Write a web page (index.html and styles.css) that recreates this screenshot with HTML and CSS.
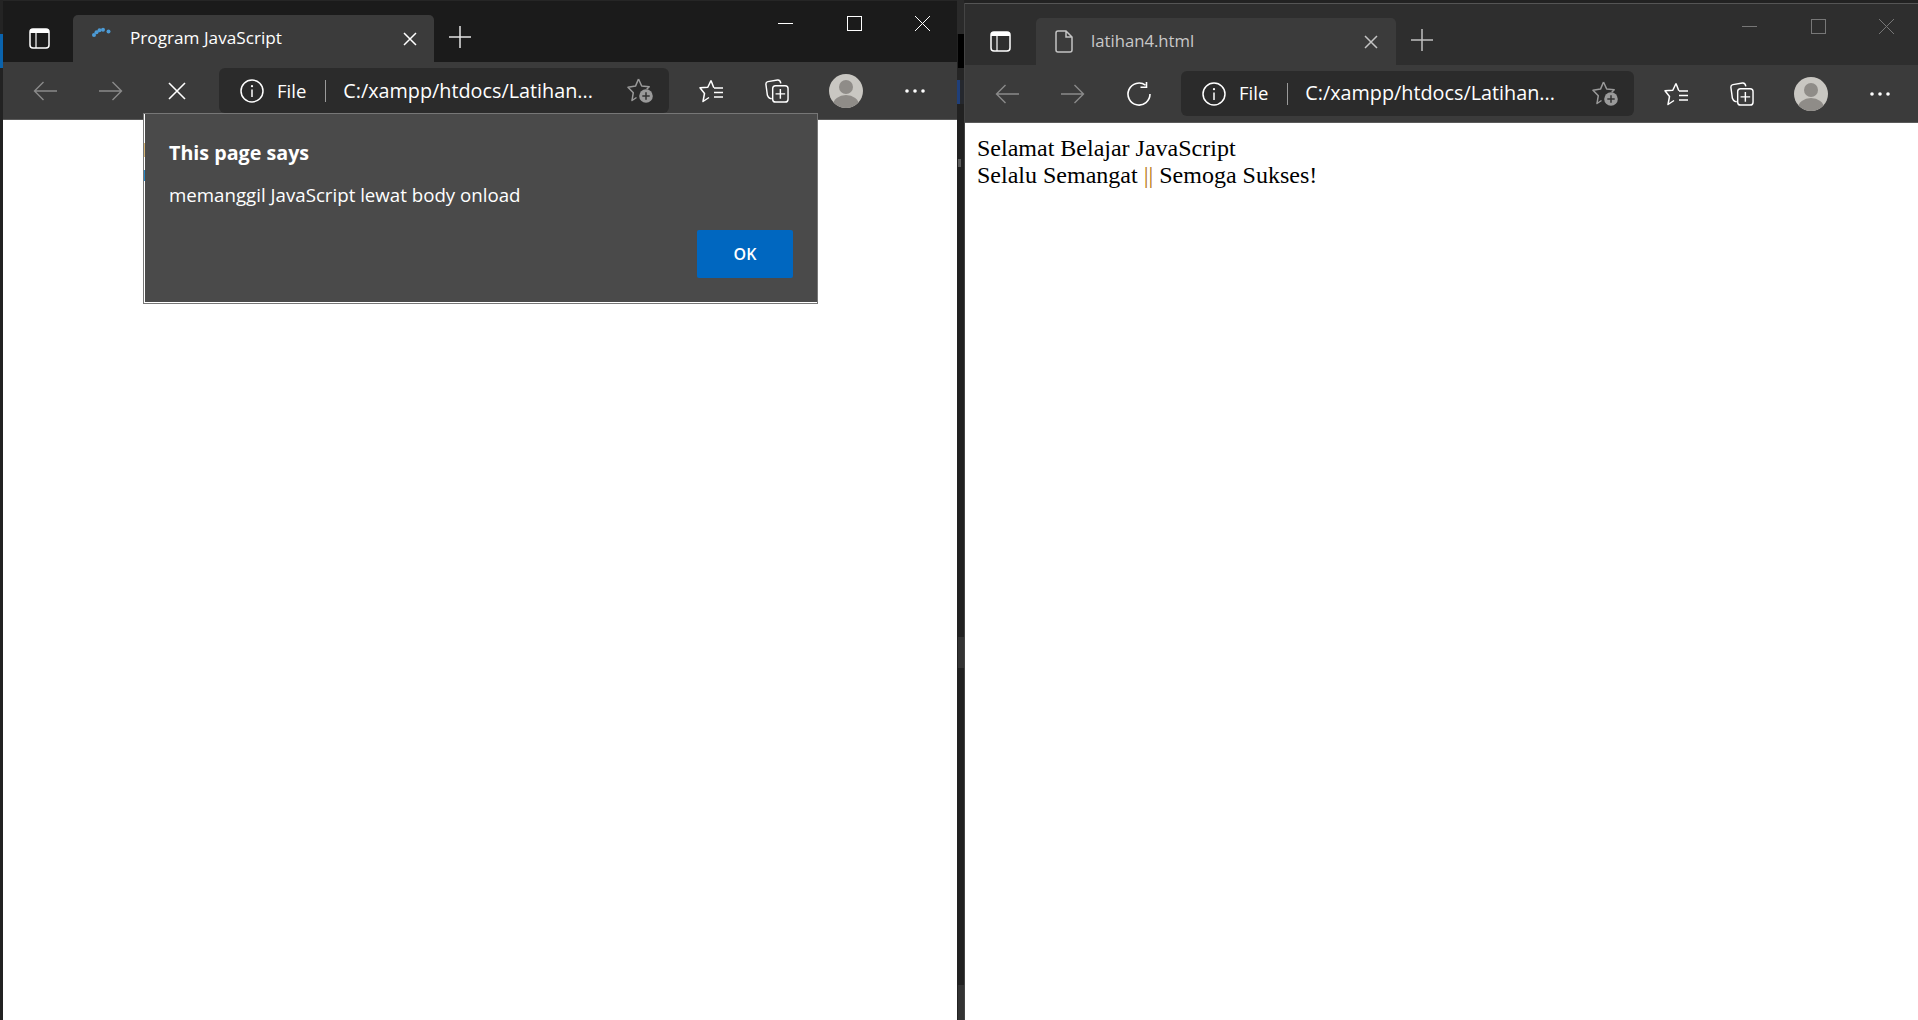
FILE: index.html
```html
<!DOCTYPE html>
<html lang="en">
<head>
  <meta charset="UTF-8">
  <title>Program JavaScript</title>
  <link rel="stylesheet" href="styles.css">
</head>
<body>
  <!-- shared icons -->
  <svg class="icon-defs" width="0" height="0">
    <symbol id="i-sidebar" viewBox="0 0 21 21">
      <rect x="1" y="1" width="19" height="19" rx="3" fill="none" stroke="currentColor" stroke-width="1.5"/>
      <path d="M1 5V4a3 3 0 0 1 3-3h13a3 3 0 0 1 3 3v1z" fill="currentColor"/>
      <path d="M7 5v15" fill="none" stroke="currentColor" stroke-width="1.2"/>
    </symbol>
    <symbol id="i-close" viewBox="0 0 14 14">
      <path d="M1 1l12 12M13 1L1 13" fill="none" stroke="currentColor" stroke-width="1.5"/>
    </symbol>
    <symbol id="i-plus" viewBox="0 0 22 22">
      <path d="M11 0v22M0 11h22" fill="none" stroke="currentColor" stroke-width="1.5"/>
    </symbol>
    <symbol id="i-back" viewBox="0 0 24 20">
      <path d="M24 10H1.5M10.5 1l-9 9 9 9" fill="none" stroke="currentColor" stroke-width="1.4"/>
    </symbol>
    <symbol id="i-forward" viewBox="0 0 24 20">
      <path d="M0 10h22.500M13.500 1l9 9-9 9" fill="none" stroke="currentColor" stroke-width="1.4"/>
    </symbol>
    <symbol id="i-stop" viewBox="0 0 18 18">
      <path d="M1 1l16 16M17 1L1 17" fill="none" stroke="currentColor" stroke-width="1.6"/>
    </symbol>
    <symbol id="i-reload" viewBox="0 0 24 24">
      <path d="M18.500 3.200A11 11 0 1 0 23 12" fill="none" stroke="currentColor" stroke-width="1.6"/>
      <path d="M19.500 0v5.200h-6" fill="none" stroke="currentColor" stroke-width="1.6"/>
    </symbol>
    <symbol id="i-info" viewBox="0 0 24 24">
      <circle cx="12" cy="12" r="11" fill="none" stroke="currentColor" stroke-width="1.5"/>
      <path d="M12 10.500v7.500" fill="none" stroke="currentColor" stroke-width="1.5"/>
      <circle cx="12" cy="7.200" r="1.100" fill="currentColor"/>
    </symbol>
    <symbol id="i-star-add" viewBox="0 0 26 25">
      <path d="M11.500 1l3.200 7 7.500.8-2.500 2.400M9.500 19.500L5 22.500l1.300-7.800L1 9.200l7.500-1.100L11.500 1" fill="none" stroke="#9a9a9a" stroke-width="1.500" stroke-linejoin="round"/>
      <circle cx="19" cy="18" r="6.800" fill="#9a9a9a"/>
      <path d="M19 14.300v7.400M15.300 18h7.400" fill="none" stroke="#333" stroke-width="1.500"/>
    </symbol>
    <symbol id="i-favorites" viewBox="0 0 24 24">
      <path d="M12 1.500l2.800 7.200M10 18.500l-6 4 1.500-8L1 8.800l7.800-.6L12 1.500" fill="none" stroke="currentColor" stroke-width="1.500" stroke-linejoin="round"/>
      <path d="M15 9h9M15 13.500h9M15 18h9" fill="none" stroke="currentColor" stroke-width="1.500"/>
    </symbol>
    <symbol id="i-collections" viewBox="0 0 25 25">
      <path d="M7 20.500l-2-.5c-1.500-.5-2-1.500-2.500-3L1 6c-.3-2 .5-3 2-3.300l10-1.700c1.500-.2 3 .5 3.500 3.500" fill="none" stroke="currentColor" stroke-width="1.500"/>
      <rect x="8" y="7" width="16" height="17" rx="3" fill="none" stroke="currentColor" stroke-width="1.500"/>
      <path d="M16 10.500v10M11 15.500h10" fill="none" stroke="currentColor" stroke-width="1.500"/>
    </symbol>
    <symbol id="i-avatar" viewBox="0 0 34 34">
      <clipPath id="avatar-clip"><circle cx="17" cy="17" r="17"/></clipPath>
      <circle cx="17" cy="17" r="17" fill="#c9c7c2"/>
      <circle cx="17" cy="13" r="7" fill="#8f8c88"/>
      <ellipse cx="17" cy="31" rx="13" ry="10" fill="#8f8c88" clip-path="url(#avatar-clip)"/>
    </symbol>
    <symbol id="i-more" viewBox="0 0 20 4">
      <circle cx="2" cy="2" r="1.800" fill="currentColor"/>
      <circle cx="10" cy="2" r="1.800" fill="currentColor"/>
      <circle cx="18" cy="2" r="1.800" fill="currentColor"/>
    </symbol>
    <symbol id="i-minimize" viewBox="0 0 15 15">
      <path d="M0 7.500h15" fill="none" stroke="currentColor"/>
    </symbol>
    <symbol id="i-maximize" viewBox="0 0 15 15">
      <rect x=".5" y=".5" width="14" height="14" fill="none" stroke="currentColor"/>
    </symbol>
    <symbol id="i-winclose" viewBox="0 0 15 15">
      <path d="M0 0l15 15M15 0L0 15" fill="none" stroke="currentColor"/>
    </symbol>
    <symbol id="i-file" viewBox="0 0 18 23">
      <path d="M1 3a2 2 0 0 1 2-2h8l6 6v13a2 2 0 0 1-2 2H3a2 2 0 0 1-2-2zM11 1v6h6" fill="none" stroke="currentColor" stroke-width="1.500"/>
    </symbol>
  </svg>

  <div class="desktop">
    <div class="strip strip-left">
      <div class="seg seg-edge"></div>
      <div class="seg seg-blue"></div>
      <div class="seg seg-rest"></div>
    </div>

    <!-- left window: loading page with alert -->
    <section class="window window-left">
      <header class="titlebar">
        <button class="side-btn"><svg class="ic-sidebar"><use href="#i-sidebar"/></svg></button>
        <div class="tab">
          <svg class="tab-spinner" viewBox="0 0 20 10">
            <circle cx="3" cy="8" r="2" fill="#4c9bd6"/>
            <circle cx="5.500" cy="5.300" r="2" fill="#4c9bd6"/>
            <circle cx="8.500" cy="3.300" r="2" fill="#4c9bd6"/>
            <circle cx="12" cy="2.800" r="2" fill="#4c9bd6"/>
            <circle cx="17.500" cy="4.500" r="2" fill="#4c9bd6"/>
          </svg>
          <span class="tab-title">Program JavaScript</span>
          <svg class="ic-tabclose"><use href="#i-close"/></svg>
        </div>
        <svg class="ic-plus"><use href="#i-plus"/></svg>
        <div class="win-controls">
          <button class="win-btn"><svg class="ic-win"><use href="#i-minimize"/></svg></button>
          <button class="win-btn"><svg class="ic-win"><use href="#i-maximize"/></svg></button>
          <button class="win-btn"><svg class="ic-win"><use href="#i-winclose"/></svg></button>
        </div>
      </header>
      <nav class="toolbar">
        <button class="tool tool-off"><svg class="ic-arrow"><use href="#i-back"/></svg></button>
        <button class="tool tool-off"><svg class="ic-arrow"><use href="#i-forward"/></svg></button>
        <button class="tool"><svg class="ic-stop"><use href="#i-stop"/></svg></button>
        <div class="address">
          <svg class="ic-info"><use href="#i-info"/></svg>
          <span class="addr-file">File</span>
          <span class="addr-sep"></span>
          <span class="addr-url">C:/xampp/htdocs/Latihan...</span>
          <svg class="ic-staradd"><use href="#i-star-add"/></svg>
        </div>
        <button class="tool"><svg class="ic-tool"><use href="#i-favorites"/></svg></button>
        <button class="tool"><svg class="ic-tool"><use href="#i-collections"/></svg></button>
        <button class="tool tool-profile"><svg class="ic-avatar"><use href="#i-avatar"/></svg></button>
        <button class="tool"><svg class="ic-more"><use href="#i-more"/></svg></button>
      </nav>
      <main class="page">
        <div class="alert">
          <div class="alert-title">This page says</div>
          <div class="alert-msg">memanggil JavaScript lewat body onload</div>
          <div class="alert-actions"><button class="alert-ok">OK</button></div>
        </div>
      </main>
    </section>

    <div class="strip strip-mid">
      <div class="seg seg-top"></div>
      <div class="seg seg-black"></div>
      <div class="seg seg-gap1"></div>
      <div class="seg seg-task"></div>
      <div class="seg seg-gap0"></div>
      <div class="seg seg-dot"></div>
      <div class="seg seg-gap2"></div>
      <div class="seg seg-light1"></div>
      <div class="seg seg-gap3"></div>
      <div class="seg seg-light2"></div>
    </div>

    <!-- right window: inactive, page loaded -->
    <section class="window window-right">
      <header class="titlebar">
        <button class="side-btn"><svg class="ic-sidebar"><use href="#i-sidebar"/></svg></button>
        <div class="tab">
          <svg class="ic-file"><use href="#i-file"/></svg>
          <span class="tab-title">latihan4.html</span>
          <svg class="ic-tabclose"><use href="#i-close"/></svg>
        </div>
        <svg class="ic-plus"><use href="#i-plus"/></svg>
        <div class="win-controls">
          <button class="win-btn"><svg class="ic-win"><use href="#i-minimize"/></svg></button>
          <button class="win-btn"><svg class="ic-win"><use href="#i-maximize"/></svg></button>
          <button class="win-btn"><svg class="ic-win"><use href="#i-winclose"/></svg></button>
        </div>
      </header>
      <nav class="toolbar">
        <button class="tool tool-off"><svg class="ic-arrow"><use href="#i-back"/></svg></button>
        <button class="tool tool-off"><svg class="ic-arrow"><use href="#i-forward"/></svg></button>
        <button class="tool"><svg class="ic-reload"><use href="#i-reload"/></svg></button>
        <div class="address">
          <svg class="ic-info"><use href="#i-info"/></svg>
          <span class="addr-file">File</span>
          <span class="addr-sep"></span>
          <span class="addr-url">C:/xampp/htdocs/Latihan...</span>
          <svg class="ic-staradd"><use href="#i-star-add"/></svg>
        </div>
        <button class="tool"><svg class="ic-tool"><use href="#i-favorites"/></svg></button>
        <button class="tool"><svg class="ic-tool"><use href="#i-collections"/></svg></button>
        <button class="tool tool-profile"><svg class="ic-avatar"><use href="#i-avatar"/></svg></button>
        <button class="tool"><svg class="ic-more"><use href="#i-more"/></svg></button>
      </nav>
      <main class="page page-text">
        Selamat Belajar JavaScript<br>
        Selalu Semangat <span class="pipes">||</span> Semoga Sukses!
      </main>
    </section>
  </div>
</body>
</html>
```

FILE: styles.css
```css
* {
  box-sizing: border-box;
}
html, body {
  margin: 0;
  height: 100%;
  overflow: hidden;
}
body {
  font-family: "Open Sans", "Noto Sans", sans-serif;
  background: #222;
  color: #fff;
}
button {
  background: none;
  border: none;
  padding: 0;
  color: inherit;
  font: inherit;
}
svg {
  display: block;
  flex: none;
}
.icon-defs {
  position: absolute;
}

.desktop {
  display: flex;
  width: 1918px;
  height: 1020px;
  overflow: hidden;
}

/* slivers of other windows between the browsers */
.strip {
  display: flex;
  flex-direction: column;
  flex: none;
}
.strip-left {
  width: 3px;
}
.strip-mid {
  width: 7px;
}
.seg-edge {
  height: 34px;
  background: #242424;
}
.seg-blue {
  height: 34px;
  background: #0a63ad;
}
.seg-rest {
  flex: 1;
  background: #222;
}
.seg-top {
  height: 34px;
  background: #2a2a2a;
}
.seg-black {
  height: 34px;
  margin-left: 1px;
  background: #000;
}
.seg-gap1 {
  height: 12px;
  background: #252525;
}
.seg-task {
  height: 24px;
  background: #25282e;
  border-left: 3px solid #1f3f7a;
}
.seg-gap0 {
  height: 55px;
  background: #212121;
}
.seg-dot {
  width: 3px;
  height: 8px;
  margin-left: 1px;
  background: #5a5a5a;
}
.seg-gap2 {
  height: 470px;
  background: #212121;
}
.seg-light1 {
  height: 31px;
  margin-left: 1px;
  background: #333;
}
.seg-gap3 {
  height: 317px;
  background: #212121;
}
.seg-light2 {
  flex: 1;
  margin-left: 1px;
  background: #333;
}

/* browser window */
.window {
  display: flex;
  flex-direction: column;
  flex: none;
}
.window-left {
  width: 954px;
  color: #fff;
}
.window-right {
  width: 954px;
  height: 1017px;
  margin-top: 3px;
  border-left: 1px solid #444;
}

.titlebar {
  display: flex;
  align-items: flex-end;
  height: 62px;
  flex: none;
  background: #1b1b1b;
  border-top: 1px solid #262626;
}
.window-right .titlebar {
  background: #2e2e2e;
  border-top-color: #555;
}
.side-btn {
  display: flex;
  align-items: flex-start;
  width: 70px;
  height: 47px;
  padding: 13px 0 0 26px;
}
.window-right .side-btn {
  width: 71px;
  padding-left: 25px;
}
.ic-sidebar {
  width: 21px;
  height: 21px;
}
.tab {
  display: flex;
  align-items: center;
  width: 361px;
  height: 47px;
  padding: 0 18px;
  background: #3b3b3b;
  border-radius: 5px 5px 0 0;
}
.window-right .tab {
  width: 360px;
  padding: 0 19px;
}
.tab-spinner {
  width: 20px;
  height: 10px;
  margin-bottom: 13px;
}
.tab-title {
  flex: 1;
  margin: 0 0 2px 19px;
  font-size: 17.2px;
  white-space: nowrap;
}
.window-right .tab-title {
  margin-left: 18px;
  font-size: 16.700px;
  color: #c9c9c9;
}
.ic-file {
  width: 18px;
  height: 23px;
  color: #c4c4c4;
}
.ic-tabclose {
  width: 14px;
  height: 14px;
  margin-right: -1px;
  color: #fff;
}
.window-right .ic-tabclose {
  color: #c4c4c4;
}
.ic-plus {
  width: 22px;
  height: 22px;
  margin: 0 0 14px 15px;
  color: #e4e4e4;
}
.window-right .ic-plus {
  color: #c0c0c0;
}

.win-controls {
  display: flex;
  align-self: flex-start;
  margin-left: auto;
}
.win-btn {
  width: 68.500px;
  height: 44px;
  display: flex;
  align-items: center;
  justify-content: center;
  padding-top: 1px;
}
.ic-win {
  width: 15px;
  height: 15px;
}
.window-right .win-controls {
  margin-right: -3px;
  color: #777;
}

.toolbar {
  display: flex;
  align-items: center;
  height: 58px;
  flex: none;
  padding-left: 9px;
  background: #3b3b3b;
  border-bottom: 1px solid #5a5a5a;
}
.tool {
  display: flex;
  align-items: center;
  justify-content: center;
  width: 66px;
  height: 45px;
  flex: none;
}
.tool-off {
  color: #8a8a8a;
}
.tool-profile {
  width: 72px;
}
.ic-arrow {
  width: 24px;
  height: 20px;
}
.ic-stop {
  width: 18px;
  height: 18px;
}
.ic-reload {
  width: 24px;
  height: 24px;
}
.ic-tool {
  width: 24px;
  height: 24px;
}
.ic-avatar {
  width: 34px;
  height: 34px;
}
.ic-more {
  width: 20px;
  height: 4px;
}

.address {
  display: flex;
  align-items: center;
  width: 450px;
  height: 45px;
  margin: 0 9px;
  padding: 0 16px 0 21px;
  background: #2b2b2b;
  border-radius: 6px;
  font-size: 18.500px;
}
.window-right .address {
  width: 453px;
}
.window-right .addr-file,
.window-right .addr-url {
  margin-bottom: 2px;
}
.ic-info {
  width: 24px;
  height: 24px;
}
.addr-file {
  margin-left: 13px;
}
.addr-sep {
  width: 1px;
  height: 22px;
  margin: 0 17px 0 19px;
  background: #9a9a9a;
}
.addr-url {
  flex: 1;
  font-size: 19.800px;
  white-space: nowrap;
}
.ic-staradd {
  width: 26px;
  height: 25px;
}

/* page area */
.page {
  flex: 1;
  position: relative;
  background: #fff;
}
.page-text {
  padding: 12px 0 0 12px;
  font: 24px/27px "Liberation Serif", serif;
  color: #000;
}
.pipes {
  color: #b5760f;
}

/* js alert */
.alert {
  position: absolute;
  top: -7px;
  left: 140px;
  width: 675px;
  height: 191px;
  padding: 25px 24px 0 25px;
  background: #4a4a4a;
  border: 1px solid #777;
  box-shadow: inset 0 -1px 0 #fff, inset 1px 0 0 #fff;
  color: #fff;
}
.alert::before {
  content: "";
  position: absolute;
  top: 29px;
  left: 0;
  width: 1px;
  height: 38px;
  background: linear-gradient(#d9b878 0 14px, #fff 14px 27px, #2a8ac8 27px 100%);
}
.alert-title {
  font-size: 19.700px;
  font-weight: 700;
  line-height: 28px;
}
.alert-msg {
  margin-top: 14px;
  font-size: 18.700px;
  line-height: 28px;
}
.alert-actions {
  display: flex;
  justify-content: flex-end;
  margin: 21px 0 0;
}
.alert-ok {
  width: 96px;
  height: 48px;
  background: #0067c0;
  border-radius: 2px;
  font-size: 16px;
  font-weight: 600;
  color: #fff;
}
```
